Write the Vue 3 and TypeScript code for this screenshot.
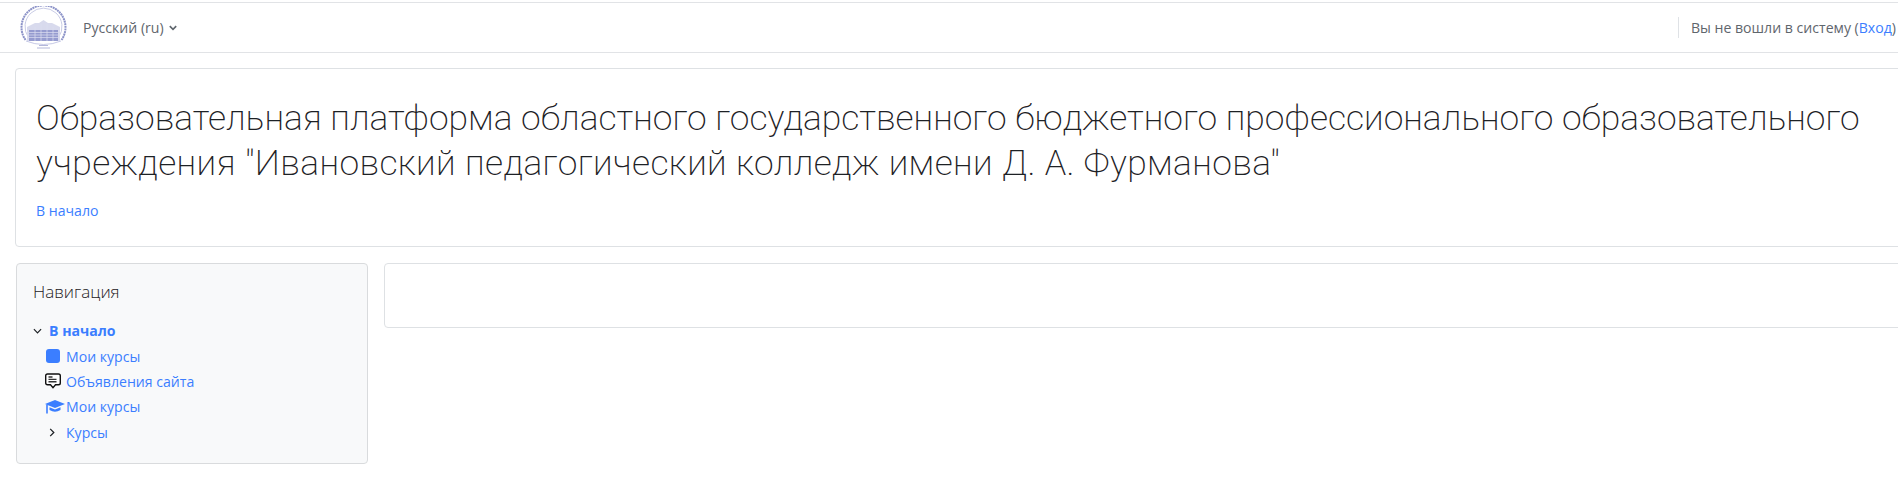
<script setup lang="ts">
const lineOne = 'Образовательная платформа областного государственного бюджетного профессионального образовательного'
const lineTwo = 'учреждения "Ивановский педагогический колледж имени Д. А. Фурманова"'
</script>

<template>
  <div class="page">
    <header class="navbar">
      <svg class="logo" viewBox="0 0 48 44" width="48" height="44">
        <path d="M5.5 34 A22 22 0 1 1 41.5 34" fill="none" stroke="#8c93c8" stroke-width="2" stroke-dasharray="2 .6" />
        <path d="M8.5 31.5 A18.5 18.5 0 1 1 38.5 31.5" fill="none" stroke="#c9cce6" stroke-width="1" />
        <path d="M7 21 L15 17 L19 17 L23.5 14 L28 17 L32 17 L40 21 L40 35 L7 35 Z" fill="#d8daed" />
        <path d="M9 24 H38 V35 H9 Z" fill="#959bcf" />
        <path d="M9 26.5 H38 M9 29 H38 M9 31.5 H38 M15 21 V35 M21 18 V35 M27 18 V35 M33 21 V35" stroke="#dcdef0" stroke-width=".7" fill="none" />
        <path d="M6 35 Q23.5 42 41 35" fill="none" stroke="#b6bade" stroke-width=".8" />
        <path d="M19 39.5 H28 M17 42 H30" stroke="#b3b7da" stroke-width="1" fill="none" />
      </svg>
      <button class="lang" type="button">
        Русский ‎(ru)‎
        <svg viewBox="0 0 10 7" width="8" height="6"><path d="M1 1.2 L5 5.2 L9 1.2" fill="none" stroke="#5f666d" stroke-width="2" /></svg>
      </button>
      <div class="usermenu">Вы не вошли в систему (<a href="#">Вход</a>)</div>
    </header>

    <section class="card heading">
      <h1>{{ lineOne }} <span class="second">{{ lineTwo }}</span></h1>
      <a class="crumb" href="#">В начало</a>
    </section>

    <div class="columns">
      <aside class="card nav">
        <h5>Навигация</h5>
        <ul>
          <li class="root">
            <svg class="chev" viewBox="0 0 10 6" width="9" height="6"><path d="M1 1 L5 5 L9 1" fill="none" stroke="#1d2125" stroke-width="1.3" /></svg>
            <a href="#"><b>В начало</b></a>
          </li>
          <li class="item">
            <span class="ico"><span class="square"></span></span>
            <a href="#">Мои курсы</a>
          </li>
          <li class="item">
            <span class="ico">
              <svg viewBox="0 0 16 16" width="16" height="16">
                <path d="M2.5 1 H13.5 Q15.3 1 15.3 2.8 V10 Q15.3 11.8 13.5 11.8 H10.5 L8 14.6 L5.5 11.8 H2.5 Q.7 11.8 .7 10 V2.8 Q.7 1 2.5 1 Z" fill="#fff" stroke="#111" stroke-width="1.4" />
                <path d="M3.5 4 H7.5 M3.5 6.4 H11.5 M3.5 8.8 H11.5" stroke="#333" stroke-width="1.4" fill="none" />
              </svg>
            </span>
            <a href="#">Объявления сайта</a>
          </li>
          <li class="item">
            <span class="ico">
              <svg viewBox="0 0 20 16" width="20" height="16">
                <path d="M10 1 L20 5 L10 9 L0 5 Z" fill="#3b7eff" />
                <path d="M4.5 8.2 L10 10.4 L15.5 8.2 V11 Q10 14.5 4.5 11 Z" fill="#3b7eff" />
                <path d="M1.2 5.5 H2.8 V14.5 H1.2 Z" fill="#3b7eff" />
              </svg>
            </span>
            <a href="#">Мои курсы</a>
          </li>
          <li class="item">
            <span class="ico">
              <svg class="right" viewBox="0 0 6 10" width="6" height="9"><path d="M1 1 L5 5 L1 9" fill="none" stroke="#1d2125" stroke-width="1.4" /></svg>
            </span>
            <a href="#">Курсы</a>
          </li>
        </ul>
      </aside>
      <main class="card content"></main>
    </div>
  </div>
</template>

<style>
html, body { margin: 0; overflow: hidden; background: #fff; }
</style>

<style scoped>
.page {
  width: 100%;
  height: 494px;
  overflow: hidden;
  font-family: "Open Sans", "Noto Sans", sans-serif;
  font-size: 14.1px;
  color: #1d2125;
  box-sizing: border-box;
  padding-top: 2px;
}
a { color: #3b7eff; text-decoration: none; }
.navbar {
  height: 51px;
  box-sizing: border-box;
  border-top: 1px solid #e1e3e6;
  border-bottom: 1px solid #e1e3e6;
  display: flex;
  align-items: center;
  padding: 0 2px 0 20px;
  color: #5f666d;
}
.logo { flex: none; }
.lang {
  margin-left: 15px;
  background: none;
  border: 0;
  padding: 0;
  font: inherit;
  color: inherit;
  display: flex;
  align-items: center;
  gap: 5px;
}
.usermenu {
  margin-left: auto;
  border-left: 1px solid #dfe2e6;
  padding-left: 12px;
  line-height: 21px;
}
.card {
  border: 1px solid #dee1e4;
  border-radius: 4px;
  box-sizing: border-box;
  background: #fff;
}
.heading {
  margin: 15px 0 0 15px;
  width: calc(100% + 20px);
  height: 179px;
  padding: 27px 20px 0;
}
h1 {
  margin: 0;
  font-family: Roboto, "Open Sans", sans-serif;
  font-weight: 200;
  font-size: 35.4px;
  line-height: 45px;
  max-width: 1840px;
  color: #1d2125;
}
.second { letter-spacing: .4px; }
.crumb { display: block; margin-top: 15px; }
.columns {
  display: flex;
  align-items: flex-start;
  margin: 16px 0 0 16px;
  gap: 16px;
}
.nav {
  flex: none;
  width: 352px;
  height: 201px;
  padding: 16px;
  background: #f8f9fa;
  border-color: #d9dbdd;
}
h5 {
  margin: 0;
  font-weight: 300;
  font-size: 17px;
  line-height: 24px;
  color: #1d2125;
}
ul { list-style: none; margin: 14px 0 0; padding: 0; }
li { display: flex; align-items: center; height: 25.4px; }
.root b { font-weight: 700; }
.chev { margin-right: 7px; }
.ico { width: 20px; margin: 0 1.5px 0 11.5px; display: flex; justify-content: flex-start; flex: none; }
.square { width: 14px; height: 14px; margin-left: 1px; border-radius: 3px; background: #3b7eff; }
.right { margin-left: 4px; }
.content {
  flex: 1;
  height: 65px;
  margin-right: -40px;
}
</style>
